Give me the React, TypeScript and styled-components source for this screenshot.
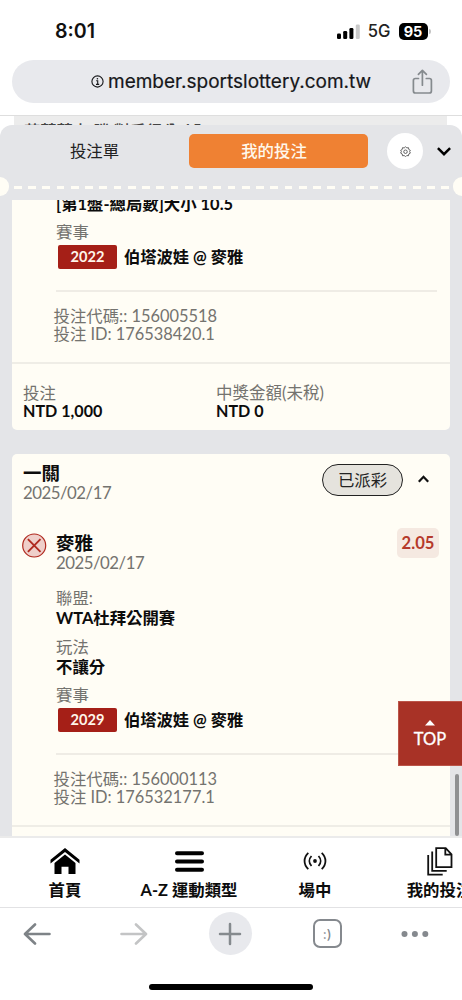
import React from 'react';
import styled, { createGlobalStyle } from 'styled-components';

const Global = createGlobalStyle`
  * { box-sizing: border-box; }
  html, body { margin: 0; padding: 0; background: #fff; }
  svg { display: block; flex: none; }
`;

const latoStack = `Lato, "Noto Sans CJK TC", sans-serif`;

const Screen = styled.div`
  width: 462px;
  height: 1000px;
  overflow: hidden;
  display: flex;
  flex-direction: column;
  background: #fff;
  font-family: ${latoStack};
  color: #111;
`;

const StatusBar = styled.div`
  height: 60px;
  padding: 0 31.5px 0 55px;
  display: flex;
  justify-content: space-between;
  align-items: center;
  font-family: Inter, "Liberation Sans", sans-serif;
`;
const Clock = styled.span`
  font-size: 19.6px;
  font-weight: 600;
  line-height: 24px;
  padding-top: 2px;
`;
const StatusRight = styled.div`
  display: flex;
  align-items: center;
  padding-top: 2px;
`;
const Network = styled.span`
  font-size: 16.6px;
  font-weight: 500;
  line-height: 20px;
  margin: 0 8px 0 8px;
  color: #222;
`;
const Battery = styled.span`
  width: 29px;
  height: 17px;
  border-radius: 5px;
  background: #000;
  color: #fff;
  font-size: 14.5px;
  font-weight: 700;
  line-height: 17px;
  text-align: center;
`;
const BatteryCap = styled.span`
  width: 2px;
  height: 5px;
  margin-left: 1px;
  border-radius: 0 2px 2px 0;
  background: #c4c4c4;
`;

const AddressBar = styled.div`
  height: 56px;
  padding: 0 12px 13px;
  border-bottom: 1px solid #dedede;
`;
const AddressPill = styled.div`
  height: 43px;
  border-radius: 22px;
  background: #e8e9ed;
  display: flex;
  align-items: center;
  padding: 0 17px 0 79px;
`;
const Url = styled.span`
  flex: 1;
  margin-left: 4px;
  font-family: Inter, "Liberation Sans", sans-serif;
  font-size: 19px;
  line-height: 24px;
  white-space: nowrap;
  color: #16171a;
  -webkit-text-stroke: 0.2px #16171a;
`;

const Page = styled.main`
  height: 720px;
  display: flex;
  flex-direction: column;
  overflow: hidden;
`;
const Underlay = styled.div`
  height: 20px;
  margin: 0 15px 0 14px;
  padding: 0 9px 0 10px;
  background: #ececec;
  display: flex;
  justify-content: space-between;
  font-size: 16.3px;
  line-height: 29px;
  font-weight: 500;
  color: #444;
`;
const UnderlayOdds = styled.span`
  font-weight: 700;
  color: #111;
`;
const Panel = styled.section`
  position: relative;
  margin-top: -11px;
  flex: 1;
  min-height: 0;
  border-radius: 12px 12px 0 0;
  background: #e4e5e8;
  display: flex;
  flex-direction: column;
`;
const PanelTabs = styled.div`
  height: 52px;
  display: flex;
  align-items: center;
  padding-right: 11px;
`;
const Tab = styled.div<{ $active?: boolean }>`
  width: ${(p) => (p.$active ? 179 : 189)}px;
  height: 34px;
  padding-right: ${(p) => (p.$active ? 9 : 0)}px;
  border-radius: 5px;
  background: ${(p) => (p.$active ? '#ef8133' : 'transparent')};
  color: ${(p) => (p.$active ? '#fff8ec' : '#222')};
  font-size: 16.4px;
  line-height: 33px;
  font-weight: ${(p) => (p.$active ? 500 : 400)};
  text-align: center;
`;
const SettingsButton = styled.div`
  width: 36px;
  height: 36px;
  margin: 0 14px 0 19px;
  border-radius: 50%;
  background: #fff;
  display: flex;
  align-items: center;
  justify-content: center;
`;
const TearLine = styled.div`
  height: 23px;
  display: flex;
  align-items: flex-start;
  justify-content: space-between;
`;
const Notch = styled.span<{ $right?: boolean }>`
  width: 9px;
  height: 19px;
  background: #fffdf5;
  border-radius: ${(p) => (p.$right ? '10px 0 0 10px' : '0 10px 10px 0')};
`;
const Dashes = styled.span`
  flex: 1;
  height: 3px;
  margin: 9px 4px 0 5px;
  background: repeating-linear-gradient(90deg, #fffdf5 0 7.6px, transparent 7.6px 14.25px);
`;

const Scroll = styled.div`
  flex: 1;
  min-height: 0;
  overflow: hidden;
  padding: 0 12px;
  display: flex;
  flex-direction: column;
  gap: 24px;
`;
const Card = styled.article<{ $first?: boolean }>`
  flex: none;
  background: #fffdf5;
  border-radius: ${(p) => (p.$first ? '0 0 5px 5px' : '5px')};
  overflow: hidden;
`;
const CardHead = styled.div`
  height: 64px;
  padding: 9px 21px 0 11px;
  display: flex;
  align-items: flex-start;
`;
const HeadText = styled.div`
  flex: 1;
`;
const HeadToggle = styled.div`
  padding-top: 12px;
`;
const Selection = styled.div`
  height: 70px;
  display: flex;
  align-items: flex-start;
  padding: 10px 11px 0 10px;
`;
const ResultMark = styled.div`
  padding-top: 5px;
`;
const SelectionText = styled.div`
  flex: 1;
  padding-left: 9px;
`;
const Line = styled.div<{ $h: number; $size?: number; $strong?: boolean; $gap?: number }>`
  height: ${(p) => p.$h}px;
  margin-top: ${(p) => p.$gap ?? 0}px;
  line-height: ${(p) => p.$h}px;
  font-size: ${(p) => p.$size ?? 16.4}px;
  font-weight: ${(p) => (p.$strong ? 700 : 400)};
  color: ${(p) => (p.$strong ? '#0c0c0c' : '#74736f')};
  white-space: nowrap;
`;
const DateLine = styled(Line)`
  font-size: 16.8px;
  letter-spacing: -0.48px;
`;
const Details = styled.div<{ $top?: number }>`
  margin-top: ${(p) => p.$top ?? 0}px;
  padding-left: 44px;
`;
const Match = styled.div`
  height: 28px;
  padding: 2px 0 0 2px;
  display: flex;
  align-items: center;
`;
const Code = styled.span`
  width: 59px;
  height: 24px;
  margin-right: 7px;
  border-radius: 2px;
  background: #a51f17;
  color: #fff5ea;
  font-size: 14.6px;
  font-weight: 700;
  line-height: 24px;
  text-align: center;
`;
const Refs = styled.div`
  margin: 20px 13px 0 44px;
  padding: 15px 0 0;
  height: 72px;
  border-top: 2px solid #efece5;
`;
const RefLines = styled.div`
  margin-left: -2.5px;
`;
const Totals = styled.div`
  height: 68px;
  border-top: 2px solid #efede6;
  padding: 20px 11px 0;
  display: grid;
  grid-template-columns: 193px 1fr;
`;
const Status = styled.span`
  width: 81px;
  height: 32px;
  margin: 1px 15px 0 0;
  border: 1.5px solid #222;
  border-radius: 16px;
  background: #e5e3dd;
  color: #222;
  font-size: 16.4px;
  line-height: 29px;
  text-align: center;
`;
const Odds = styled.span`
  width: 42px;
  height: 30px;
  border-radius: 5px;
  background: #f5e9e1;
  color: #b5392b;
  font-size: 16.6px;
  font-weight: 700;
  line-height: 31px;
  text-align: center;
`;
const ToTop = styled.button`
  position: absolute;
  right: 0;
  top: 576px;
  width: 64px;
  height: 65px;
  border: 1px solid #bb5549;
  border-right: 0;
  padding: 18px 1px 0 0;
  background: #a83226;
  color: #fff;
  font-family: ${latoStack};
  font-size: 16.5px;
  line-height: 20px;
  -webkit-text-stroke: 0.3px #fff;
  display: flex;
  flex-direction: column;
  align-items: center;
  gap: 3px;
`;
const ScrollThumb = styled.div`
  position: absolute;
  right: 3px;
  bottom: 0;
  width: 4px;
  height: 62px;
  border-radius: 2px;
  background: #8f9092;
`;

const SiteNav = styled.nav`
  height: 72px;
  border-top: 2px solid #ebebeb;
  border-bottom: 1px solid #e2e2e4;
  display: grid;
  grid-template-columns: 130px 118px 134px 115px;
`;
const SiteNavItem = styled.div`
  display: flex;
  flex-direction: column;
  align-items: center;
  font-size: 16.4px;
  font-weight: 700;
  line-height: 22px;
  white-space: nowrap;
  color: #0c0c0c;
`;
const NavIcon = styled.div`
  height: 41px;
  padding-top: 5px;
  display: flex;
  align-items: center;
`;
const BrowserBar = styled.div`
  height: 51px;
  margin: 0 -11px;
  display: grid;
  grid-template-columns: repeat(4, 96.6px) 80px;
  justify-items: center;
  align-items: center;
`;
const NewTab = styled.span`
  width: 43px;
  height: 43px;
  border-radius: 50%;
  background: #e8e9ed;
  display: flex;
  align-items: center;
  justify-content: center;
`;
const TabCount = styled.span`
  width: 29px;
  height: 29px;
  border: 2px solid #85898e;
  border-radius: 7px;
  color: #85898e;
  font-family: Inter, "Liberation Sans", sans-serif;
  font-size: 13px;
  font-weight: 500;
  line-height: 26px;
  text-align: center;
`;
const HomeIndicator = styled.div`
  width: 164px;
  height: 6px;
  margin: 25px auto 0;
  border-radius: 3px;
  background: #000;
`;

const SignalIcon = () => (
  <svg width="23" height="15" viewBox="0 0 23 15">
    <rect x="0" y="9.5" width="4" height="5.5" rx="1.3" />
    <rect x="6.2" y="7" width="4" height="8" rx="1.3" />
    <rect x="12.4" y="4" width="4" height="11" rx="1.3" />
    <rect x="18.8" y="0.5" width="4" height="14.5" rx="1.3" fill="#c9c9c9" />
  </svg>
);
const InfoIcon = () => (
  <svg width="13" height="13" viewBox="0 0 13 13" fill="none" stroke="#16171a">
    <circle cx="6.5" cy="6.5" r="5.6" strokeWidth="1.1" />
    <path d="M5.2 5.7h1.5v3.6M5 9.4h3.2" strokeWidth="1.1" />
    <circle cx="6.4" cy="3.7" r="0.8" fill="#16171a" stroke="none" />
  </svg>
);
const ShareIcon = () => (
  <svg width="21" height="26" viewBox="0 0 21 26" fill="none" stroke="#858a8e" strokeWidth="1.7" strokeLinecap="round" strokeLinejoin="round">
    <path d="M6.5 9.5H3.4a2 2 0 0 0-2 2V22a2 2 0 0 0 2 2h14a2 2 0 0 0 2-2V11.5a2 2 0 0 0-2-2H14.3" />
    <path d="M10.4 16.2V1.5M6.4 5.3l4-4 4 4" />
  </svg>
);
const GearIcon = () => (
  <svg width="11" height="11" viewBox="0 0 24 24" fill="none" stroke="#555" strokeWidth="2">
    <path d="M12 1.5l2.7 2.7 3.8-.5.7 3.9 3.4 1.9L21 12l1.600 3.500-3.400 1.900-.7 3.900-3.800-.5L12 23.500l-2.700-2.700-3.800.5-.7-3.900-3.400-1.900L3 12 1.400 9.500l3.400-1.900.7-3.900 3.800.5z" />
    <circle cx="12" cy="12.5" r="3.8" />
  </svg>
);
const ChevronDown = () => (
  <svg width="14" height="9" viewBox="0 0 14 9" fill="none" stroke="#000" strokeWidth="2.5">
    <path d="M0.9 1.2L7 7.2l6.1-6" />
  </svg>
);
const ChevronUp = () => (
  <svg width="11" height="8" viewBox="0 0 11 8" fill="none" stroke="#111" strokeWidth="2.2">
    <path d="M0.8 6.8L5.5 1.8l4.7 5" />
  </svg>
);
const LostIcon = () => (
  <svg width="25" height="25" viewBox="0 0 25 25" fill="none" stroke="#b02a20">
    <circle cx="12.2" cy="12.5" r="11.5" fill="#efcfca" strokeWidth="1.2" />
    <path d="M5.9 6.2l12.6 12.6M18.5 6.2L5.9 18.8" strokeWidth="1.9" />
  </svg>
);
const UpTriangle = () => (
  <svg width="10" height="6" viewBox="0 0 10 6" fill="#fff">
    <path d="M0 5.5L5 0 10 5.5z" />
  </svg>
);
const HomeIcon = () => (
  <svg width="30" height="26" viewBox="0 0 30 26">
    <path d="M15 0L29.5 11.8v3.6L15 4 0.5 15.4v-3.6z" />
    <path d="M15 6.5L25.5 15v11h-7v-7.3h-7V26h-7V15z" />
  </svg>
);
const MenuIcon = () => (
  <svg width="29" height="21" viewBox="0 0 29 21" stroke="#000" strokeWidth="4" strokeLinecap="round">
    <path d="M2 2.2h25M2 10.5h25M2 18.7h25" />
  </svg>
);
const LiveIcon = () => (
  <svg width="24" height="18" viewBox="0 0 24 18" fill="none" stroke="#111" strokeWidth="1.8">
    <path d="M5.3 0.9C0.3 5.5 0.3 12.5 5.3 17.1M18.7 0.9c5 4.6 5 11.6 0 16.2M8.500 4c-2.800 3-2.800 7 0 10M15.500 4c2.800 3 2.800 7 0 10" />
    <circle cx="12" cy="9" r="1.9" fill="#111" stroke="none" />
  </svg>
);
const FilesIcon = () => (
  <svg width="26" height="29" viewBox="0 0 26 29" fill="none" stroke="#111" strokeWidth="1.8">
    <path d="M9.2 1.2h9.5l5.8 6.2v12.8H9.2zM18.3 1.2v6.4h6.2" />
    <path d="M5.2 4.5v19.4h14.5M1.2 8v19.6h14.5" />
  </svg>
);
const ArrowIcon = ({ color, flip }: { color: string; flip?: boolean }) => (
  <svg width="28" height="22" viewBox="0 0 28 22" fill="none" stroke={color} strokeWidth="2.6" strokeLinecap="round" strokeLinejoin="round">
    <path d={flip ? 'M1.5 11h24M16 1.5l10 9.5-10 9.5' : 'M26.5 11h-24M12 1.5L2 11l10 9.5'} />
  </svg>
);
const PlusIcon = () => (
  <svg width="24" height="24" viewBox="0 0 24 24" stroke="#858a8e" strokeWidth="2.5" strokeLinecap="round">
    <path d="M2 12h20M12 2v20" />
  </svg>
);
const MoreIcon = () => (
  <svg width="28" height="8" viewBox="0 0 28 8" fill="#85898e">
    <circle cx="3.5" cy="4" r="3" />
    <circle cx="13.9" cy="4" r="3" />
    <circle cx="24.3" cy="4" r="3" />
  </svg>
);

const MatchRow = ({ code }: { code: string }) => (
  <Match>
    <Code>{code}</Code>
    <Line $h={24} $size={16.3} $strong>伯塔波娃 @ 麥雅</Line>
  </Match>
);
const BetRefs = ({ code, id }: { code: string; id: string }) => (
  <Refs>
    <RefLines>
      <Line $h={18}>投注代碼:: {code}</Line>
      <Line $h={18}>投注 ID: {id}</Line>
    </RefLines>
  </Refs>
);

export default function App() {
  return (
    <Screen>
      <Global />
      <StatusBar>
        <Clock>8:01</Clock>
        <StatusRight>
          <SignalIcon />
          <Network>5G</Network>
          <Battery>95</Battery>
          <BatteryCap />
        </StatusRight>
      </StatusBar>
      <AddressBar>
        <AddressPill>
          <InfoIcon />
          <Url>member.sportslottery.com.tw</Url>
          <ShareIcon />
        </AddressPill>
      </AddressBar>
      <Page>
        <Underlay>
          <span>莎菲蘭卡 勝 對手得分 15</span>
          <UnderlayOdds>4.45</UnderlayOdds>
        </Underlay>
        <Panel>
          <PanelTabs>
            <Tab>投注單</Tab>
            <Tab $active>我的投注</Tab>
            <SettingsButton><GearIcon /></SettingsButton>
            <ChevronDown />
          </PanelTabs>
          <TearLine>
            <Notch />
            <Dashes />
            <Notch $right />
          </TearLine>
          <Scroll>
            <Card $first>
              <Details $top={-7}>
                <Line $h={22} $strong>[第1盤-總局數]大小 10.5</Line>
                <Line $h={20} $gap={7}>賽事</Line>
                <MatchRow code="2022" />
              </Details>
              <BetRefs code="156005518" id="176538420.1" />
              <Totals>
                <div>
                  <Line $h={18}>投注</Line>
                  <Line $h={18} $size={16.1} $strong>NTD 1,000</Line>
                </div>
                <div>
                  <Line $h={18} $size={16.5}>中獎金額(未稅)</Line>
                  <Line $h={18} $size={16.1} $strong>NTD 0</Line>
                </div>
              </Totals>
            </Card>
            <Card>
              <CardHead>
                <HeadText>
                  <Line $h={20} $size={18.5} $strong>一關</Line>
                  <DateLine $h={20}>2025/02/17</DateLine>
                </HeadText>
                <Status>已派彩</Status>
                <HeadToggle><ChevronUp /></HeadToggle>
              </CardHead>
              <Selection>
                <ResultMark><LostIcon /></ResultMark>
                <SelectionText>
                  <Line $h={30} $size={18.5} $strong>麥雅</Line>
                  <DateLine $h={10}>2025/02/17</DateLine>
                </SelectionText>
                <Odds>2.05</Odds>
              </Selection>
              <Details>
                <Line $h={20}>聯盟:</Line>
                <Line $h={20} $strong>WTA杜拜公開賽</Line>
                <Line $h={20} $gap={9}>玩法</Line>
                <Line $h={20} $strong>不讓分</Line>
                <Line $h={20} $gap={8}>賽事</Line>
                <MatchRow code="2029" />
              </Details>
              <BetRefs code="156000113" id="176532177.1" />
              <Totals />
            </Card>
          </Scroll>
          <ScrollThumb />
          <ToTop>
            <UpTriangle />
            TOP
          </ToTop>
        </Panel>
      </Page>
      <SiteNav>
        <SiteNavItem><NavIcon><HomeIcon /></NavIcon>首頁</SiteNavItem>
        <SiteNavItem><NavIcon><MenuIcon /></NavIcon>A-Z 運動類型</SiteNavItem>
        <SiteNavItem><NavIcon><LiveIcon /></NavIcon>場中</SiteNavItem>
        <SiteNavItem><NavIcon><FilesIcon /></NavIcon>我的投注</SiteNavItem>
      </SiteNav>
      <BrowserBar>
        <ArrowIcon color="#7e8387" />
        <ArrowIcon color="#c3c4c5" flip />
        <NewTab><PlusIcon /></NewTab>
        <TabCount>:)</TabCount>
        <MoreIcon />
      </BrowserBar>
      <HomeIndicator />
    </Screen>
  );
}
